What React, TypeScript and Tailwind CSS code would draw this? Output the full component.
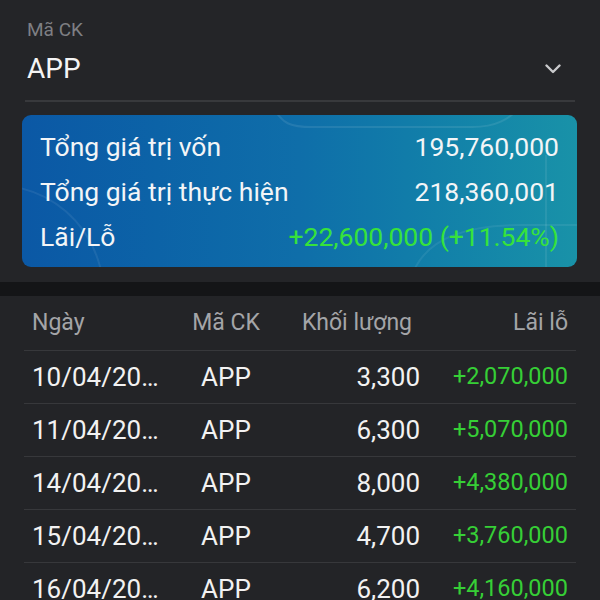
import { Fragment } from 'react';

type Trade = {
  date: string;
  code: string;
  volume: string;
  pnl: string;
};

const trades: Trade[] = [
  { date: '10/04/20…', code: 'APP', volume: '3,300', pnl: '+2,070,000' },
  { date: '11/04/20…', code: 'APP', volume: '6,300', pnl: '+5,070,000' },
  { date: '14/04/20…', code: 'APP', volume: '8,000', pnl: '+4,380,000' },
  { date: '15/04/20…', code: 'APP', volume: '4,700', pnl: '+3,760,000' },
  { date: '16/04/20…', code: 'APP', volume: '6,200', pnl: '+4,160,000' },
];

const summary = [
  { label: 'Tổng giá trị vốn', value: '195,760,000', green: false },
  { label: 'Tổng giá trị thực hiện', value: '218,360,001', green: false },
  { label: 'Lãi/Lỗ', value: '+22,600,000 (+11.54%)', green: true },
];

function Chevron() {
  return (
    <svg width="16" height="10" viewBox="0 0 16 10" fill="none">
      <path d="M1.5 1.5 8 8l6.5-6.5" stroke="#c9cacc" strokeWidth="2.4" strokeLinecap="round" strokeLinejoin="round" />
    </svg>
  );
}

export default function App() {
  return (
    <div className="w-[600px] h-[600px] overflow-hidden bg-[#242528] font-['Roboto','Liberation_Sans',sans-serif]">
      {/* Stock picker */}
      <div className="px-[25px] pt-[19px]">
        <div className="pl-[2px] text-[19px] leading-[21px] text-[#7e7f83]">Mã CK</div>
        <div className="mt-[14px] flex items-center justify-between pl-[2px] pr-[14px]">
          <span className="text-[28px] leading-[30px] text-[#f4f4f4]">APP</span>
          <Chevron />
        </div>
        <div className="mt-[16px] h-[2px] bg-[#38393c]" />
      </div>

      {/* Summary card */}
      <div className="pb-[15px] pt-[13px]">
        <div className="relative mx-[22px] w-[555px] overflow-hidden rounded-[9px] bg-gradient-to-r from-[#0b58a5] via-[#0f6ea9] to-[#1992a8] px-[18px] pb-[8px] pt-[9px]">
          <svg className="pointer-events-none absolute inset-0" width="555" height="153" viewBox="0 0 555 153" fill="none">
            <path d="M250 -10c10 20 20 22 40 22h160c20 0 40-5 55-30" stroke="#ffffff" strokeOpacity="0.09" strokeWidth="2" />
            <path d="M-30 70c60 0 100 40 110 90" stroke="#ffffff" strokeOpacity="0.07" strokeWidth="2" />
            <path d="M390 160c15-40 60-50 110-50h60" stroke="#ffffff" strokeOpacity="0.07" strokeWidth="2" />
            <path d="M524 40v120" stroke="#ffffff" strokeOpacity="0.08" strokeWidth="2" />
          </svg>
          {summary.map((row) => (
            <div key={row.label} className="relative flex items-center justify-between text-[26.5px] leading-[45px]">
              <span className="text-[#f3f5f7]">{row.label}</span>
              <span className={row.green ? 'text-[#37e23b]' : 'text-[#f3f5f7]'}>{row.value}</span>
            </div>
          ))}
        </div>
      </div>

      <div className="h-[14px] bg-[#141517]" />

      {/* Trade history */}
      <div className="bg-[#232427] px-[24px]">
        <div className="grid grid-cols-[138px_112px_138px_1fr] px-[8px]">
          <div className="flex h-[54px] items-center text-[23px] text-[#a4a5a8]">Ngày</div>
          <div className="flex h-[54px] items-center justify-center text-[23px] text-[#a4a5a8]">Mã CK</div>
          <div className="flex h-[54px] items-center justify-end pr-[8px] text-[23px] text-[#a4a5a8]">Khối lượng</div>
          <div className="flex h-[54px] items-center justify-end text-[23px] text-[#a4a5a8]">Lãi lỗ</div>
          {trades.map((t) => (
            <Fragment key={t.date}>
              <div className="flex h-[53px] items-center border-t border-[#37383b] -ml-[8px] pl-[8px] text-[26px] text-[#f2f2f2]">{t.date}</div>
              <div className="flex h-[53px] items-center justify-center border-t border-[#37383b] text-[26px] text-[#f2f2f2]">{t.code}</div>
              <div className="flex h-[53px] items-center justify-end border-t border-[#37383b] text-[26px] text-[#f2f2f2]">{t.volume}</div>
              <div className="flex h-[53px] items-center justify-end border-t border-[#37383b] -mr-[8px] pr-[8px] text-[23.5px] text-[#36cf36]">{t.pnl}</div>
            </Fragment>
          ))}
        </div>
      </div>
    </div>
  );
}
